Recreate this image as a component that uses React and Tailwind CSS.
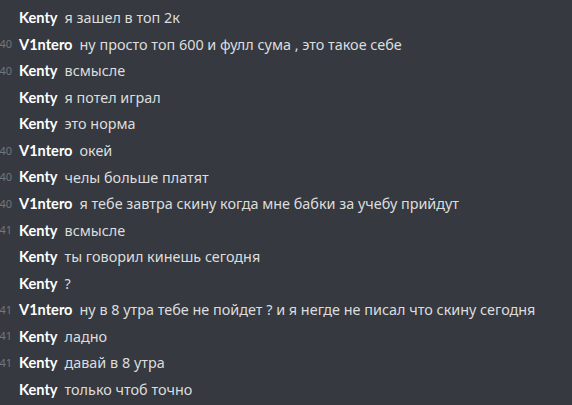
const messages = [
  { time: '20:39', author: 'Kenty', text: 'я зашел в топ 2к', showTime: false },
  { time: '20:40', author: 'V1ntero', text: 'ну просто топ 600 и фулл сума , это такое себе', showTime: true },
  { time: '20:40', author: 'Kenty', text: 'всмысле', showTime: true },
  { time: '20:40', author: 'Kenty', text: 'я потел играл', showTime: false },
  { time: '20:40', author: 'Kenty', text: 'это норма', showTime: false },
  { time: '20:40', author: 'V1ntero', text: 'окей', showTime: true },
  { time: '20:40', author: 'Kenty', text: 'челы больше платят', showTime: true },
  { time: '20:40', author: 'V1ntero', text: 'я тебе завтра скину когда мне бабки за учебу прийдут', showTime: true },
  { time: '20:41', author: 'Kenty', text: 'всмысле', showTime: true },
  { time: '20:41', author: 'Kenty', text: 'ты говорил кинешь сегодня', showTime: false },
  { time: '20:41', author: 'Kenty', text: '?', showTime: false },
  { time: '20:41', author: 'V1ntero', text: 'ну в 8 утра тебе не пойдет ? и я негде не писал что скину сегодня', showTime: true },
  { time: '20:41', author: 'Kenty', text: 'ладно', showTime: true },
  { time: '20:41', author: 'Kenty', text: 'давай в 8 утра', showTime: true },
  { time: '20:41', author: 'Kenty', text: 'только чтоб точно', showTime: false },
];

function Row({ msg }) {
  return (
    <div className="flex h-[26.57px] items-center whitespace-nowrap">
      {/* compact-mode timestamp, pushed off the left edge */}
      <div className="flex w-[12px] shrink-0 justify-end overflow-hidden">
        {msg.showTime && (
          <span className="text-[11px] text-[#72767d]">{msg.time}</span>
        )}
      </div>
      <span className="ml-[7px] font-['Lato',sans-serif] text-[14.6px] font-bold text-white">
        {msg.author}
      </span>
      <span className="ml-[7px] text-[14.4px] text-[#dcddde]">{msg.text}</span>
    </div>
  );
}

export default function App() {
  return (
    <div
      className="h-[405px] w-[572px] overflow-hidden bg-[#36393f] pt-[4.7px]"
      style={{ fontFamily: '"Noto Sans", "Open Sans", sans-serif' }}
    >
      {messages.map((m, i) => (
        <Row key={i} msg={m} />
      ))}
    </div>
  );
}
